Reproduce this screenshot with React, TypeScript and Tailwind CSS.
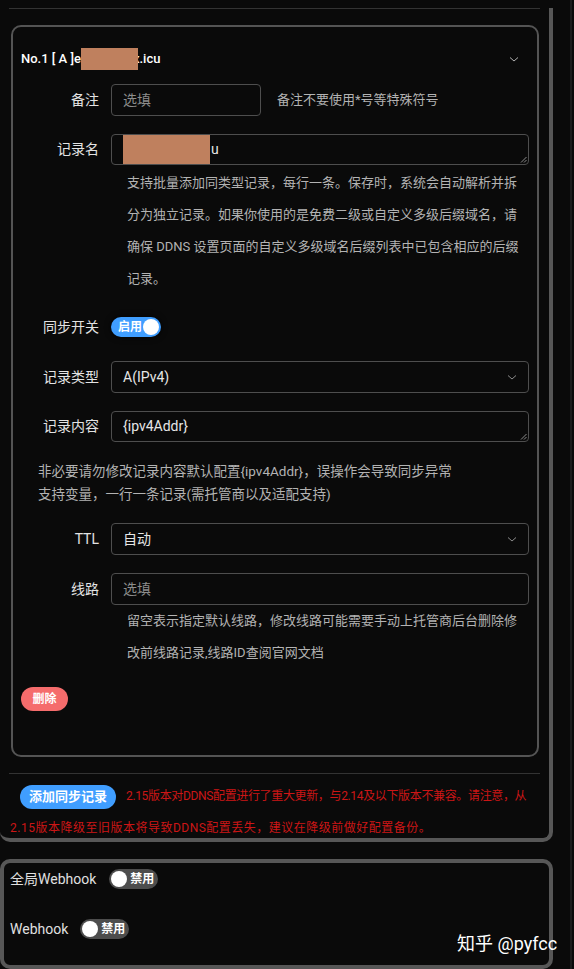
import React from "react";

const font = "font-['Roboto','Noto_Sans_CJK_SC',sans-serif]";

function Chevron({ className = "" }: { className?: string }) {
  return (
    <svg width="12" height="12" viewBox="0 0 12 12" className={className}>
      <path d="M2 4.5 L6 8 L10 4.5" fill="none" stroke="currentColor" strokeWidth="1" />
    </svg>
  );
}

function Grip() {
  return (
    <svg width="7" height="7" viewBox="0 0 7 7" className="absolute bottom-[1px] right-[1px] text-[#8a8a8a]">
      <path d="M6.5 1 L1 6.5 M6.5 4 L4 6.5" stroke="currentColor" strokeWidth="1" />
    </svg>
  );
}

function Label({ text }: { text: string }) {
  return (
    <div className="w-[90px] shrink-0 pr-[12px] text-right text-[14px] text-[#e3e3e3]">
      {text}
    </div>
  );
}

function Field({
  label,
  children,
  className = "",
}: {
  label: string;
  children: React.ReactNode;
  className?: string;
}) {
  return (
    <div className={`flex items-center ${className}`}>
      <Label text={label} />
      {children}
    </div>
  );
}

function Box({
  children,
  kind = "input",
  className = "",
}: {
  children?: React.ReactNode;
  kind?: "input" | "select" | "textarea";
  className?: string;
}) {
  return (
    <div
      className={`relative flex flex-1 items-center rounded-[4px] border border-[#4e4e4e] bg-[#0a0a0a] pl-[11px] pr-[10px] text-[14px] text-[#e6e6e6] ${className}`}
    >
      <div className="flex-1">{children}</div>
      {kind === "select" && <Chevron className="text-[#8a8a8a]" />}
      {kind === "textarea" && <Grip />}
    </div>
  );
}

function Help({ lines }: { lines: string[] }) {
  return (
    <div className="whitespace-nowrap pl-[106px] text-[13px] leading-[32px] text-[#b3b3b3]">
      {lines.map((l) => (
        <div key={l}>{l}</div>
      ))}
    </div>
  );
}

function SwitchOn() {
  return (
    <div className="flex h-5 w-[50px] items-center justify-between whitespace-nowrap rounded-full bg-[#409eff] pl-[7px] pr-[2px] shadow-[0_0_6px_rgba(0,0,0,0.8)]">
      <span className="text-[12px] font-bold leading-none text-white">启用</span>
      <span className="h-4 w-4 shrink-0 rounded-full bg-white" />
    </div>
  );
}

function SwitchOff() {
  return (
    <div className="flex h-5 w-[49px] items-center gap-[3px] whitespace-nowrap rounded-full bg-[#4d4d4d] pl-[2px] pr-[6px]">
      <span className="h-4 w-4 shrink-0 rounded-full bg-white" />
      <span className="text-[12px] font-bold leading-none text-white">禁用</span>
    </div>
  );
}

export default function App() {
  return (
    <div className={`relative flex h-[969px] w-[574px] overflow-hidden bg-[#0a0a0a] ${font}`}>
      <div className="w-[553px] shrink-0">
        {/* Sync records panel */}

        <div className="rounded-b-[10px] border-r-4 border-b-4 border-[#575757] pl-[9px] pr-[9px]">
          <div className="mt-2 h-px bg-[#333333]" />

          <div className="ml-[2px] mr-px mt-4 rounded-[10px] border-2 border-[#545454] px-2 pb-[44px]">
            {/* Header */}

            <div className="flex items-center justify-between pr-[9px] pt-[21px] text-[13px] leading-[20px] font-medium text-white">
              <div className="flex items-center whitespace-nowrap">
                <span>No.1 [ A ]e</span>
                <span className="relative z-10 -mr-[5px] inline-block h-[22px] w-[57px] bg-[#bf805e]" />
                <span>x.icu</span>
              </div>
              <Chevron className="text-[#b0b0b0]" />
            </div>

            <Field label="备注" className="mt-[14px]">
              <Box className="h-8 max-w-[150px] flex-none basis-[150px]">
                <span className="text-[#8c8c8c]">选填</span>
              </Box>
              <span className="ml-4 whitespace-nowrap text-[13px] text-[#b3b3b3]">备注不要使用*号等特殊符号</span>
            </Field>

            <Field label="记录名" className="mt-[18px]">
              <Box kind="textarea" className="h-[31px] pl-[9px]">
                <div className="flex items-center">
                  <span className="inline-block h-[29px] w-[87px] bg-[#bf805e]" />
                  <span className="ml-px">u</span>
                </div>
              </Box>
            </Field>
            <div className="pt-[2px]">
              <Help
                lines={[
                  "支持批量添加同类型记录，每行一条。保存时，系统会自动解析并拆",
                  "分为独立记录。如果你使用的是免费二级或自定义多级后缀域名，请",
                  "确保 DDNS 设置页面的自定义多级域名后缀列表中已包含相应的后缀",
                  "记录。",
                ]}
              />
            </div>

            <Field label="同步开关" className="mt-4 h-8">
              <SwitchOn />
            </Field>

            <Field label="记录类型" className="mt-[18px]">
              <Box kind="select" className="h-8">A(IPv4)</Box>
            </Field>

            <Field label="记录内容" className="mt-[18px]">
              <Box kind="textarea" className="h-[31px]">{"{ipv4Addr}"}</Box>
            </Field>

            <div className="mt-[18px] whitespace-nowrap pl-[17px] text-[13.5px] leading-[23px] text-[#b3b3b3]">
              <div>非必要请勿修改记录内容默认配置{"{ipv4Addr}"}，误操作会导致同步异常</div>
              <div>支持变量，一行一条记录(需托管商以及适配支持)</div>
            </div>

            <Field label="TTL" className="mt-[17px]">
              <Box kind="select" className="h-8">自动</Box>
            </Field>

            <Field label="线路" className="mt-[18px]">
              <Box className="h-8">
                <span className="text-[#8c8c8c]">选填</span>
              </Box>
            </Field>
            <Help
              lines={[
                "留空表示指定默认线路，修改线路可能需要手动上托管商后台删除修",
                "改前线路记录,线路ID查阅官网文档",
              ]}
            />

            <button className="mt-[18px] flex h-6 w-[47px] items-center justify-center rounded-full bg-[#f56c6c] text-[12px] font-bold text-white">
              删除
            </button>
          </div>

          <div className="mt-4 h-px bg-[#333333]" />

          <div className="mt-[6px] h-[58px] whitespace-nowrap pl-px text-[12px] leading-[32px] text-[#cc1616]">
            <button className="ml-[10px] mr-[10px] inline-flex h-6 w-[96px] items-center justify-center rounded-full bg-[#409eff] align-middle text-[13px] font-bold leading-none text-white">
              添加同步记录
            </button>
            <span className="tracking-[-0.35px]">2.15版本对DDNS配置进行了重大更新，与2.14及以下版本不兼容。请注意，从</span>
            <br />
            <span className="tracking-[0.5px]">2.15版本降级至旧版本将导致DDNS配置丢失，建议在降级前做好配置备份。</span>
          </div>
        </div>

        {/* Webhook panel */}

        <div className="mt-[17px] rounded-[10px] border-4 border-[#575757] pb-5 pl-[6px]">
          <div className="flex h-8 items-center gap-[13px] text-[14px] text-[#e0e0e0]">
            <span>全局Webhook</span>
            <SwitchOff />
          </div>
          <div className="mt-[18px] flex h-8 items-center gap-[12px] text-[14px] text-[#e0e0e0]">
            <span>Webhook</span>
            <SwitchOff />
          </div>
        </div>
      </div>

      {/* Scrollbar strip */}

      <div className="flex flex-1">
        <div className="w-[17px]" />
        <div className="w-[2px] bg-[#1c1c1c]" />
      </div>

      <div className="absolute left-[457px] top-[930px] whitespace-nowrap text-[18px] text-white">
        知乎 @pyfcc
      </div>
    </div>
  );
}
